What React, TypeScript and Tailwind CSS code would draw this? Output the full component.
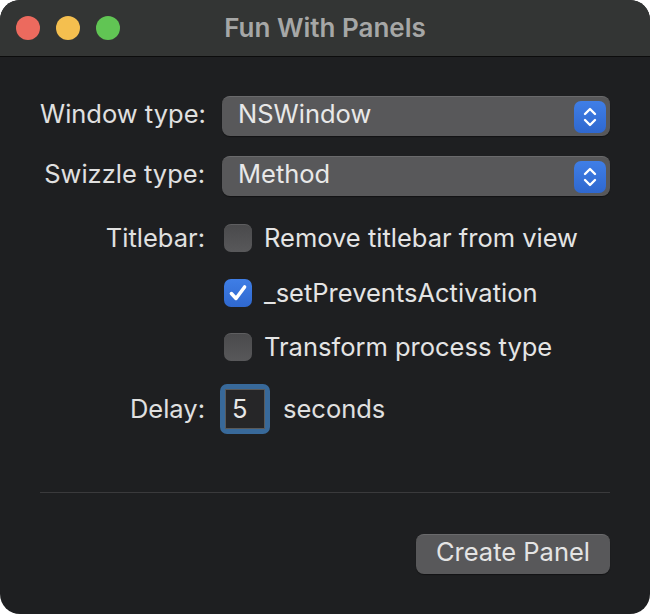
import React from "react"

const font = { fontFamily: "Inter, 'Noto Sans', sans-serif" }

function Stepper() {
  return (
    <span className="flex h-[32px] w-[32px] items-center justify-center rounded-[7px] bg-gradient-to-b from-[#3f7ee6] to-[#2f68cf]">
      <svg width="16" height="22" viewBox="0 0 16 22" fill="none" stroke="white" strokeWidth="2.4" strokeLinecap="round" strokeLinejoin="round">
        <path d="M3 8 L8 3 L13 8" />
        <path d="M3 14 L8 19 L13 14" />
      </svg>
    </span>
  )
}

function Popup({ value }: { value: string }) {
  return (
    <div className="flex h-[40px] w-[388px] items-center justify-between rounded-[8px] border-t border-[#6a6a6c] bg-[#58585a] pl-[16px] pr-[4px] shadow-[0_1px_1px_rgba(0,0,0,0.4)]">
      <span className="pb-[5px] text-[25.5px] leading-none text-[#e8e8e8]">{value}</span>
      <Stepper />
    </div>
  )
}

function Checkbox({ checked, label }: { checked?: boolean; label: string }) {
  return (
    <div className="flex h-[28px] items-center">
      {checked ? (
        <span className="flex h-[28px] w-[28px] items-center justify-center rounded-[7px] bg-gradient-to-b from-[#3f7ee6] to-[#2f68cf]">
          <svg width="22" height="22" viewBox="0 0 20 20" fill="none" stroke="white" strokeWidth="3.2" strokeLinecap="round" strokeLinejoin="round">
            <path d="M4 10.5 L8.2 15 L16 4.5" />
          </svg>
        </span>
      ) : (
        <span className="h-[28px] w-[28px] rounded-[7px] border-t border-[#5e5e60] bg-gradient-to-b from-[#4a4a4c] to-[#58585a]" />
      )}
      <span className="ml-[12px] text-[25.5px] leading-none text-[#e4e4e4]">{label}</span>
    </div>
  )
}

export default function App() {
  return (
    <div className="h-[614px] w-[650px] bg-white" style={font}>
      <div className="flex h-full w-full flex-col overflow-hidden rounded-[20px] bg-[#1e1f21]">
        <div className="relative flex h-[57px] shrink-0 items-center justify-center border-b border-[#0c0c0c] bg-[#333534]">
          <div className="absolute left-[16px] top-[16px] flex gap-[16px]">
            <span className="h-[24px] w-[24px] rounded-full bg-[#ec6a5e]" />
            <span className="h-[24px] w-[24px] rounded-full bg-[#f4bf4f]" />
            <span className="h-[24px] w-[24px] rounded-full bg-[#61c554]" />
          </div>
          <span className="text-[26px] font-semibold leading-none text-[#a6a7a6]">Fun With Panels</span>
        </div>

        <div className="flex flex-col px-[40px] pt-[39px] leading-none text-[#e0e0e0]">
          <div className="flex h-[40px] items-center">
            <span className="w-[165px] whitespace-nowrap pb-[5px] text-right text-[25.5px]">Window type:</span>
            <div className="ml-[17px]">
              <Popup value="NSWindow" />
            </div>
          </div>
          <div className="mt-[20px] flex h-[40px] items-center">
            <span className="w-[165px] whitespace-nowrap pb-[5px] text-right text-[25.5px]">Swizzle type:</span>
            <div className="ml-[17px]">
              <Popup value="Method" />
            </div>
          </div>

          <div className="mt-[28px] flex h-[28px] items-center">
            <span className="w-[165px] text-right text-[25.5px]">Titlebar:</span>
            <div className="ml-[19px]">
              <Checkbox label="Remove titlebar from view" />
            </div>
          </div>
          <div className="mt-[27px] flex h-[28px] items-center pl-[184px]">
            <Checkbox checked label="_setPreventsActivation" />
          </div>
          <div className="mt-[26px] flex h-[28px] items-center pl-[184px]">
            <Checkbox label="Transform process type" />
          </div>

          <div className="mt-[23px] flex h-[50px] items-center">
            <span className="w-[165px] text-right text-[25.5px]">Delay:</span>
            <div className="ml-[15px] flex h-[50px] w-[50px] items-center justify-center rounded-[7px] bg-[#38699a] p-[5px]">
              <div className="flex h-full w-full items-center border border-[#5a5a5a] bg-[#262628] pl-[6px] text-[25.5px] text-[#e8e8e8]">5</div>
            </div>
            <span className="ml-[13px] text-[25.5px]">seconds</span>
          </div>

          <div className="mt-[58px] h-[1px] w-[570px] bg-[#3a3a3c]" />

          <div className="mt-[41px] flex justify-end">
            <button className="h-[40px] w-[194px] rounded-[8px] border-t border-[#6a6a6c] bg-[#58585a] pb-[5px] text-[25.5px] leading-none text-[#e4e4e4] shadow-[0_1px_1px_rgba(0,0,0,0.4)]">
              Create Panel
            </button>
          </div>
        </div>
      </div>
    </div>
  )
}
